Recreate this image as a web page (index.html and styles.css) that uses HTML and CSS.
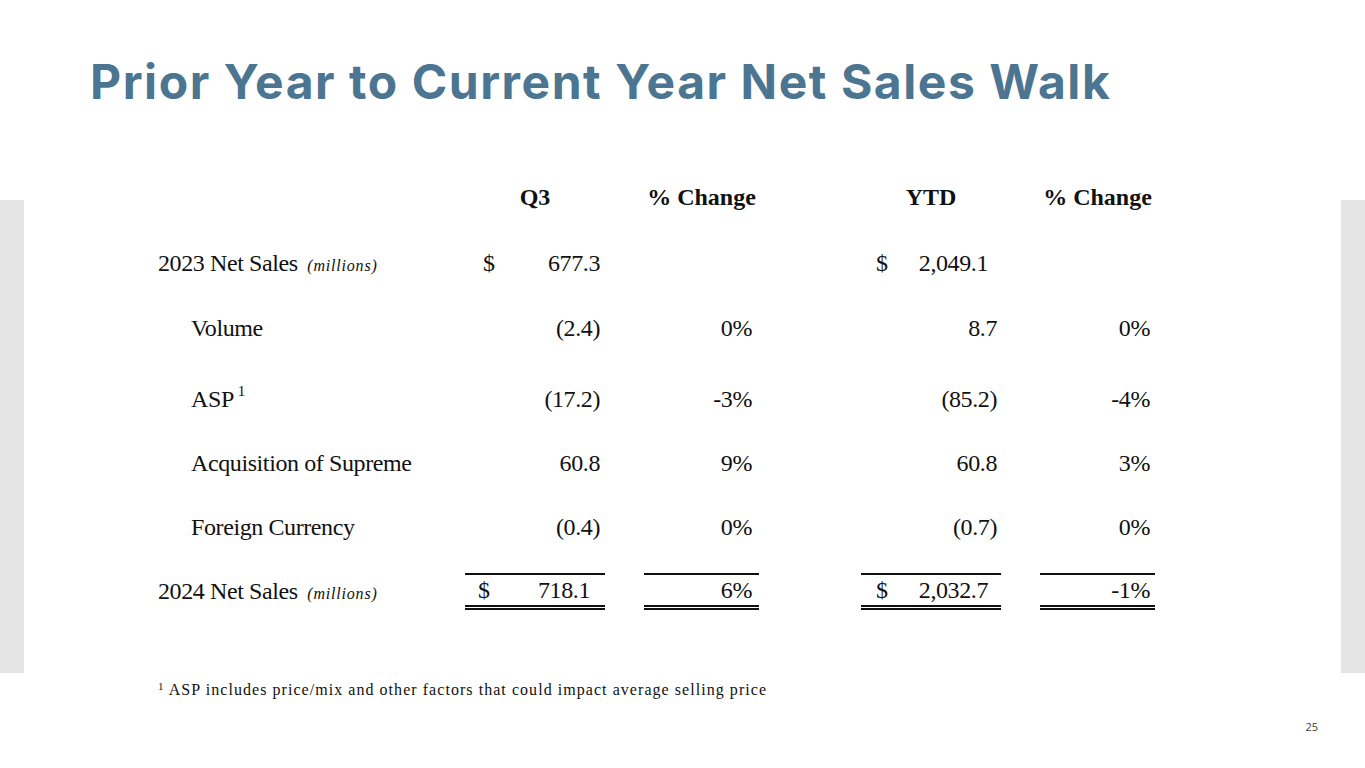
FILE: index.html
```html
<!DOCTYPE html>
<html lang="en">
<head>
<meta charset="utf-8">
<title>Prior Year to Current Year Net Sales Walk</title>
<link rel="stylesheet" href="styles.css">
</head>
<body>
<div class="slide">
  <header class="title-bar">
    <h1 class="title">Prior Year to Current Year Net Sales Walk</h1>
  </header>
  <main class="body-row">
    <div class="side"><div class="side-bar"></div></div>
    <div class="content">
      <div class="walk">
        <div class="cell label"></div>
        <div class="cell head">Q3</div>
        <div class="cell head pct-gap">% Change</div>
        <div class="cell head ytd-gap">YTD</div>
        <div class="cell head pct-gap">% Change</div>

        <div class="cell label">2023 Net Sales <span class="unit">(millions)</span></div>
        <div class="cell amt q3 dollar"><span>$</span><span>677.3</span></div>
        <div class="cell pct q3p pct-gap"></div>
        <div class="cell amt ytd dollar ytd-gap"><span>$</span><span>2,049.1</span></div>
        <div class="cell pct ytdp pct-gap"></div>

        <div class="cell label sub">Volume</div>
        <div class="cell amt q3">(2.4)</div>
        <div class="cell pct q3p pct-gap">0%</div>
        <div class="cell amt ytd ytd-gap">8.7</div>
        <div class="cell pct ytdp pct-gap">0%</div>

        <div class="cell label sub">ASP<sup class="note">1</sup></div>
        <div class="cell amt q3">(17.2)</div>
        <div class="cell pct q3p pct-gap">-3%</div>
        <div class="cell amt ytd ytd-gap">(85.2)</div>
        <div class="cell pct ytdp pct-gap">-4%</div>

        <div class="cell label sub">Acquisition of Supreme</div>
        <div class="cell amt q3">60.8</div>
        <div class="cell pct q3p pct-gap">9%</div>
        <div class="cell amt ytd ytd-gap">60.8</div>
        <div class="cell pct ytdp pct-gap">3%</div>

        <div class="cell label sub">Foreign Currency</div>
        <div class="cell amt q3">(0.4)</div>
        <div class="cell pct q3p pct-gap">0%</div>
        <div class="cell amt ytd ytd-gap">(0.7)</div>
        <div class="cell pct ytdp pct-gap">0%</div>

        <div class="cell label">2024 Net Sales <span class="unit">(millions)</span></div>
        <div class="cell amt total q3-total dollar"><span>$</span><span>718.1</span></div>
        <div class="cell pct total q3p pct-gap">6%</div>
        <div class="cell amt total ytd dollar ytd-gap"><span>$</span><span>2,032.7</span></div>
        <div class="cell pct total ytdp pct-gap">-1%</div>
      </div>
      <p class="footnote"><sup class="fn-mark">1</sup> ASP includes price/mix and other factors that could impact average selling price</p>
    </div>
    <div class="side"><div class="side-bar"></div></div>
  </main>
  <footer class="page-foot">
    <span class="page-num">25</span>
  </footer>
</div>
</body>
</html>
```
FILE: styles.css
```css
* { box-sizing: border-box; }

html, body {
  margin: 0;
  padding: 0;
  background: #ffffff;
}

.slide {
  width: 1365px;
  height: 768px;
  display: flex;
  flex-direction: column;
  overflow: hidden;
}

.title-bar {
  padding: 52px 0 0 90px;
  height: 179px;
}

.title {
  margin: 0;
  font-family: "Inter", "Open Sans", sans-serif;
  font-weight: 700;
  font-size: 48px;
  line-height: 60px;
  letter-spacing: 1.55px;
  color: #4b7591;
}

.body-row {
  display: flex;
  height: 532px;
}

.side {
  width: 24px;
  flex: none;
  padding-top: 21px;
}

.side-bar {
  height: 473px;
  background: #e4e4e4;
}

.content {
  flex: 1;
  padding-left: 134px;
  font-family: "Liberation Serif", "Times New Roman", serif;
  color: #111111;
}

.walk {
  display: grid;
  grid-template-columns: 307px 140px 154px 242px 154px;
  grid-template-rows: 66px 65px 71px 64px 64px 64px 37px;
  align-items: start;
  font-size: 24px;
  letter-spacing: -0.4px;
}

.cell {
  height: 36px;
  line-height: 36px;
  white-space: nowrap;
}

.head {
  font-weight: 700;
  text-align: center;
  letter-spacing: 0;
}

.pct-gap { margin-left: 39px; }
.ytd-gap { margin-left: 102px; }

.sub { padding-left: 33px; }

.unit {
  font-style: italic;
  font-size: 16px;
  letter-spacing: 0.8px;
  margin-left: 4px;
}

.note {
  font-size: 15px;
  vertical-align: 11px;
  line-height: 0;
  margin-left: 4px;
}

.amt { text-align: right; }
.pct { text-align: right; }

.dollar {
  display: flex;
  justify-content: space-between;
}

.q3 { padding: 0 5px 0 18px; }
.q3-total { padding: 0 15px 0 13px; }
.q3p { padding-right: 7px; }
.ytd { padding: 0 4px 0 15px; }
.ytd.dollar { padding-right: 13px; }
.ytdp { padding-right: 5px; }

.total {
  height: 37px;
  line-height: 30px;
  border-top: 2px solid #111111;
  border-bottom: 5px double #111111;
}

.footnote {
  margin: 70px 0 0 0;
  font-size: 16px;
  line-height: 20px;
  letter-spacing: 1.05px;
  color: #111111;
}

.fn-mark {
  font-size: 11px;
  vertical-align: 5px;
  line-height: 0;
}

.page-foot {
  display: flex;
  justify-content: flex-end;
  padding: 9px 47px 0 0;
}

.page-num {
  font-family: "Open Sans", "Liberation Sans", sans-serif;
  font-size: 11px;
  line-height: 14px;
  color: #404040;
}
```
